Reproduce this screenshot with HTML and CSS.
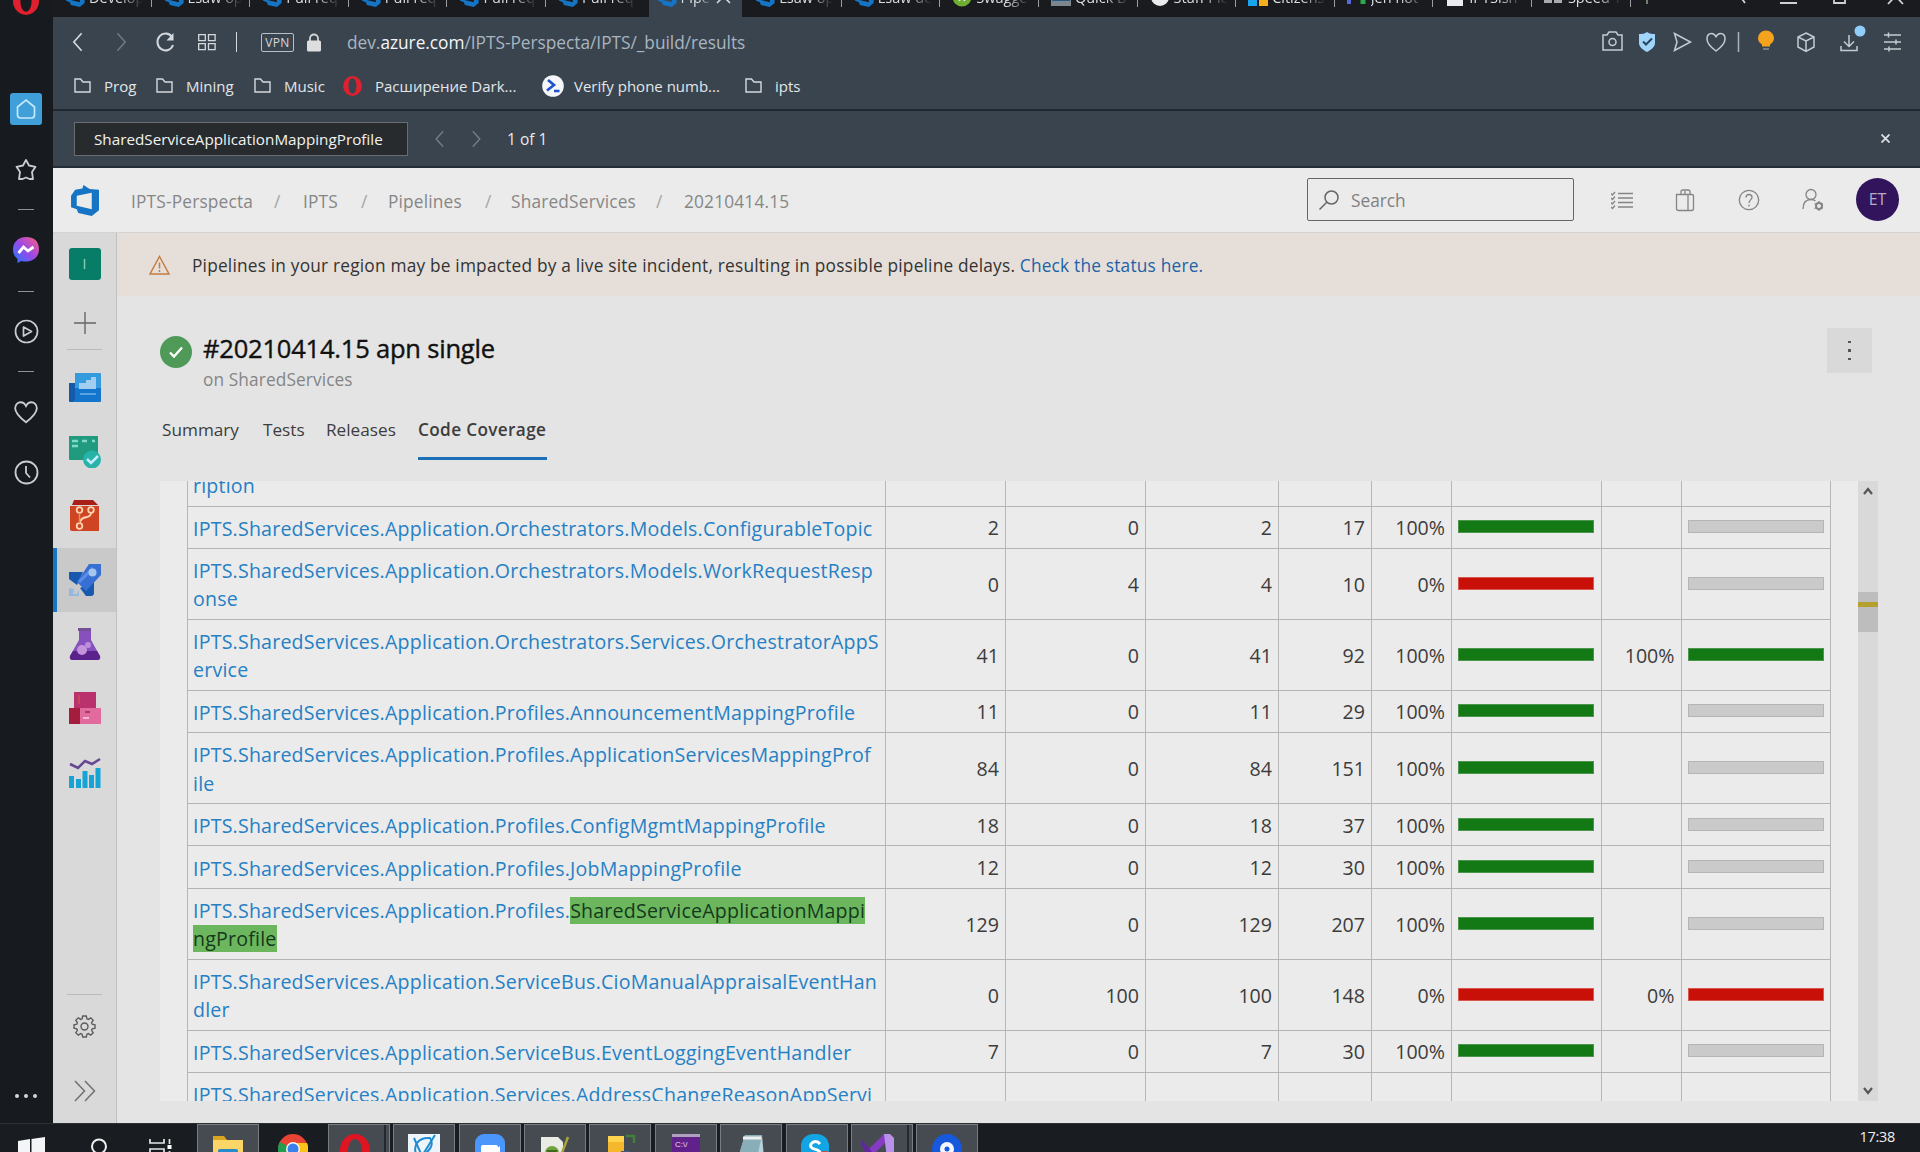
FILE: index.html
```
<!DOCTYPE html>
<html lang="en">
<head>
<meta charset="utf-8">
<title>Pipelines - Code Coverage</title>
<link rel="stylesheet" href="styles.css">
</head>
<body>
<svg class="defs" width="0" height="0">
  <defs>
    <symbol id="azure" viewBox="0 0 28 32"><path fill="#1674c4" fill-rule="evenodd" d="M1 11l4-6 7-1.500L13 0l6 4 9 1v21l-7 6-13-3-1.500-4L1 23zM6.500 11v10.500L21 25V8z"/></symbol>
    <symbol id="folder" viewBox="0 0 17 15"><path d="M1 1h5.500l2.500 3h7v10H1z" fill="none" stroke="#d5d9de" stroke-width="1.400"/></symbol>
    <symbol id="opera" viewBox="0 0 28 30"><path fill="#e0202e" fill-rule="evenodd" d="M14 0a14 15 0 1 0 0 30a14 15 0 0 0 0-30zM14 3.500c3.500 0 6 5 6 11.500s-2.500 11.500-6 11.500S8 21.500 8 15s2.500-11.500 6-11.500z"/></symbol>
    <symbol id="heart" viewBox="0 0 24 24"><path d="M12 21.500C5 16 2 12.500 2 8.500 2 5 4.500 3 7 3c2.300 0 4 1.500 5 3.500C13 4.500 14.700 3 17 3c2.500 0 5 2 5 5.500 0 4-3 7.500-10 13z" fill="none" stroke="currentColor" stroke-width="1.700"/></symbol>
    <symbol id="left" viewBox="0 0 12 22"><path d="M10.500 1.500 2 11l8.500 9.500" fill="none" stroke="currentColor" stroke-width="1.800"/></symbol>
    <symbol id="right" viewBox="0 0 12 22"><path d="M1.500 1.500 10 11l-8.500 9.500" fill="none" stroke="currentColor" stroke-width="1.800"/></symbol>
  </defs>
</svg>
<div class="screen">
  <aside class="rail">
    <svg class="rail-logo" width="26" height="30"><use href="#opera"/></svg>
    <div class="rail-home"><svg width="22" height="22" viewBox="0 0 22 22"><path d="M2.500 9 11 2l8.500 7v8q0 3-3 3h-11q-3 0-3-3z" fill="none" stroke="#c8e8fb" stroke-width="1.700"/></svg></div>
    <svg class="rail-star" width="24" height="24" viewBox="0 0 24 24"><path d="m12 2 3 5.500 6.500 1.300L18 14l1 7h-3.500L12 19.500 8.500 21H5l1-7L2.500 8.800 9 7.500z" fill="none" stroke="#c9cdd1" stroke-width="1.800" stroke-linejoin="round"/></svg>
    <i class="dash"></i>
    <svg class="rail-icon" width="26" height="27" viewBox="0 0 26 27"><defs><linearGradient id="mg" x1="0" y1="1" x2="1" y2="0"><stop offset="0" stop-color="#1e7cff"/><stop offset=".5" stop-color="#9a48e8"/><stop offset="1" stop-color="#ff5f7c"/></linearGradient></defs><path fill="url(#mg)" d="M13 0C5 0 0 5.500 0 12.500c0 4 1.500 7 4.500 9.500v4l4-2c9 2.500 17.500-3 17.500-11.500S21 0 13 0z"/><path d="m5.500 16 5-6 4.500 4 5.500-4" fill="none" stroke="#fff" stroke-width="2.800"/></svg>
    <i class="dash"></i>
    <svg class="rail-icon" width="25" height="25" viewBox="0 0 25 25" fill="none" stroke="#c9cdd1" stroke-width="1.700"><circle cx="12.500" cy="12.500" r="11"/><path d="m9.500 8 8 4.500-8 4.500z" stroke-linejoin="round"/></svg>
    <i class="dash"></i>
    <svg class="rail-icon" width="28" height="26"><use href="#heart"/></svg>
    <svg class="rail-clock" width="25" height="25" viewBox="0 0 25 25" fill="none" stroke="#c9cdd1" stroke-width="1.800"><circle cx="12.500" cy="12.500" r="11"/><path d="M12 6v7l4 4.500"/></svg>
    <div class="rail-dots"><b></b><b></b><b></b></div>
  </aside>

  <div class="window">
    <div class="tabs">
      <div class="tab"><svg width="20" height="22"><use href="#azure"/></svg><span>Develop</span></div>
      <div class="tab"><svg width="20" height="22"><use href="#azure"/></svg><span>Lsaw op</span></div>
      <div class="tab"><svg width="20" height="22"><use href="#azure"/></svg><span>Pull req</span></div>
      <div class="tab"><svg width="20" height="22"><use href="#azure"/></svg><span>Pull req</span></div>
      <div class="tab"><svg width="20" height="22"><use href="#azure"/></svg><span>Pull req</span></div>
      <div class="tab no-line"><svg width="20" height="22"><use href="#azure"/></svg><span>Pull req</span></div>
      <div class="tab active"><svg width="20" height="22"><use href="#azure"/></svg><span>Pipe</span><svg class="tab-x" width="15" height="15" viewBox="0 0 15 15"><path d="m1 1 13 13M14 1 1 14" stroke="#d5d9de" stroke-width="1.600"/></svg></div>
      <div class="tab"><svg width="20" height="22"><use href="#azure"/></svg><span>Lsaw op</span></div>
      <div class="tab"><svg width="20" height="22"><use href="#azure"/></svg><span>Lsaw de</span></div>
      <div class="tab"><svg width="20" height="22" viewBox="0 0 20 22"><circle cx="10" cy="12" r="9.500" fill="#6fae35"/><path d="M6 10v3l2 3M14 10v3l-2 3" stroke="#e5efda" fill="none" stroke-width="1.500"/></svg><span>Swagge</span></div>
      <div class="tab"><svg width="20" height="22" viewBox="0 0 20 22"><path d="M0 2h20v19H0z" fill="#7d868d"/><path d="M1 3h18v13H1z" fill="#245b85"/></svg><span>Quick B</span></div>
      <div class="tab"><svg width="20" height="22" viewBox="0 0 20 22"><circle cx="10" cy="12" r="9" fill="#e9ebec"/></svg><span>Staff Ple</span></div>
      <div class="tab"><svg width="20" height="22" viewBox="0 0 20 22"><path d="M0 11h9v10H0z" fill="#18a5ee"/><path d="M11 11h9v10h-9z" fill="#f6b01d"/></svg><span>Citizens</span></div>
      <div class="tab"><svg width="20" height="22" viewBox="0 0 20 22"><path d="M2 8v11" stroke="#5868d8" stroke-width="4"/><path d="M16 8v11" stroke="#2eaa4c" stroke-width="5"/></svg><span>Jen not</span></div>
      <div class="tab"><svg width="20" height="22" viewBox="0 0 20 22"><path d="M2 6h16v15H2z" fill="#e9ebec"/></svg><span>IPTSish</span></div>
      <div class="tab"><svg width="20" height="22" viewBox="0 0 20 22"><path d="M0 14h8v4H0zM10 14h8v4h-8z" fill="#a6abb0"/></svg><span>Speed T</span></div>
      <svg class="newtab" width="16" height="16" viewBox="0 0 16 16"><path d="M8 0v16M0 7h16" stroke="#8ea48c" stroke-width="1.500"/></svg>
      <svg class="winctl" width="176" height="17" viewBox="0 0 176 17" fill="none" stroke="#cfd2d5" stroke-width="1.800"><path d="m3-4 5 7M43 3h17M97-6v9h11v-9M151 4l15-16m-15 0 15 16"/></svg>
    </div>

    <div class="toolbar">
      <svg class="t-back" width="11" height="22"><use href="#left"/></svg>
      <svg class="t-fwd" width="11" height="22"><use href="#right"/></svg>
      <svg class="t-reload" width="20" height="21" viewBox="0 0 20 21"><path d="M17 5A8 8.500 0 1 0 18 13" fill="none" stroke="#d5d9de" stroke-width="2"/><path d="M18.500 1v7.500h-7z" fill="#d5d9de"/></svg>
      <svg class="t-grid" width="18" height="17" viewBox="0 0 18 17" fill="none" stroke="#d5d9de" stroke-width="1.300"><path d="M.7.7h6.600v6H.7zM10.500.7h6.600v6h-6.600zM.7 9.700h6.600v6H.7zM10.500 9.700h6.600v6h-6.600z"/></svg>
      <i class="t-sep"></i>
      <span class="vpn">VPN</span>
      <svg class="t-lock" width="14" height="19" viewBox="0 0 14 19"><path d="M3 9V5.500a4 4 0 0 1 8 0V9" fill="none" stroke="#d5d5d5" stroke-width="1.800"/><rect y="7.500" width="14" height="11" rx="1.500" fill="#dedede"/></svg>
      <span class="url">dev.<b>azure.com</b>/IPTS-Perspecta/IPTS/_build/results</span>
      <svg class="t-actions" width="310" height="36" viewBox="0 0 310 36" fill="none" stroke="#c4cbd2" stroke-width="1.500">
        <path d="M3 11h4l2-3h7l2 3h4v15H3z"/><circle cx="12.500" cy="18" r="3.500"/>
        <path d="M47 8c3 2 5 2 8 2v9c0 4-4 7-8 9-4-2-8-5-8-9v-9c3 0 5 0 8-2z" fill="#a0d4fb" stroke="none"/><path d="m43 17.500 3 3 6-6" stroke="#26455f" stroke-width="2"/>
        <path d="m74.500 9.500 16 8.500-16 8.500 2.500-8.500z"/>
        <path d="M116 27c-7-5-9-8.500-9-12 0-3.500 2-5.500 4.500-5.500 2 0 3.500 1.300 4.500 3.200 1-1.900 2.500-3.200 4.500-3.200 2.500 0 4.500 2 4.500 5.500 0 3.500-2 7-9 12z"/>
        <path d="M138.500 8v20" stroke="#aab4bd"/>
        <path d="M162 20.500c-3-2-4-4-4-6.500a8 7.500 0 0 1 16 0c0 2.500-1 4.500-4 6.500v2h-8z" fill="#f5a21d" stroke="none"/><path d="M163 24h6v2h-6z" fill="#777d80" stroke="none"/>
        <path d="m206 9 8 4v10l-8 4.500-8-4.500V13zm-8 4 8 4 8-4m-8 4v10"/>
        <path d="M249 11v11m-5-4.500 5 5 5-5M241 22v4.500h16V22"/><circle cx="260" cy="7" r="5.500" fill="#91cdf9" stroke="none"/>
        <path d="M284 11h17M284 18h17M284 25h17M288.500 8.500v5M296 15.500v5M289 22.500v5"/>
      </svg>
    </div>

    <div class="bookmarks">
      <span><svg width="17" height="15"><use href="#folder"/></svg>Prog</span>
      <span><svg width="17" height="15"><use href="#folder"/></svg>Mining</span>
      <span><svg width="17" height="15"><use href="#folder"/></svg>Music</span>
      <span><svg width="19" height="20"><use href="#opera"/></svg>Расширение Dark...</span>
      <span><svg width="22" height="22" viewBox="0 0 22 22"><circle cx="11" cy="11" r="10.800" fill="#f4f6f8"/><path d="m6 5 6 5-7 5.500M12 16h5.500" fill="none" stroke="#1e50cc" stroke-width="2.600"/></svg>Verify phone numb...</span>
      <span><svg width="17" height="15"><use href="#folder"/></svg>ipts</span>
    </div>

    <div class="find">
      <div class="find-input">SharedServiceApplicationMappingProfile</div>
      <svg class="find-prev" width="11" height="18"><use href="#left"/></svg>
      <svg class="find-next" width="11" height="18"><use href="#right"/></svg>
      <span class="find-count">1 of 1</span>
      <svg class="find-close" width="9" height="9" viewBox="0 0 9 9"><path d="m.5.5 8 8m0-8-8 8" stroke="#dce0e4" stroke-width="1.800"/></svg>
    </div>

    <header class="ado-head">
      <svg class="ado-logo" width="29" height="31" viewBox="0 0 28 32" preserveAspectRatio="none"><use href="#azure"/></svg>
      <nav class="crumbs">
        <span>IPTS-Perspecta</span><i>/</i><span>IPTS</span><i>/</i><span>Pipelines</span><i>/</i><span>SharedServices</span><i>/</i><span>20210414.15</span>
      </nav>
      <div class="search"><svg width="20" height="20" viewBox="0 0 20 20" fill="none" stroke="#666" stroke-width="1.500"><circle cx="12.500" cy="7.500" r="6.500"/><path d="m8 12-7.500 7.500"/></svg><span>Search</span></div>
      <svg class="head-icons" width="212" height="30" viewBox="0 0 212 30" fill="none" stroke="#858585" stroke-width="1.300">
        <path d="M7 8.500h15M7 13h15M7 17.500h15M7 22h15M0 8.500l1.500 1.500L4 7M0 13l1.500 1.500L4 11.500M0 17.500 1.500 19 4 16M0 22l1.500 1.500L4 20.500"/>
        <path d="M65.500 9.500H81q1.500 0 1.500 1.500v12.500q0 2-2 2H67.500q-2 0-2-2zM77 9.500v16M70 9.500V7q0-2 2-2h5q2 0 2 2v2M74 9.500V6"/>
        <circle cx="138" cy="15" r="9.700"/><path d="M135 12.500c0-4 6-4 6 0 0 2-3 2.500-3 5.500M138 19.500v2"/>
        <circle cx="200" cy="9.500" r="5"/><path d="M192 24c0-6 3-9.500 8-9.500 2 0 3.500.5 4.500 1.500"/><circle cx="208" cy="21" r="3" stroke-width="2"/><path d="M208 16v2M208 24v2M203.500 18.500l2 1M211 22.500l2 1M203.500 23.500l2-1M211 19.500l1.500-1"/>
      </svg>
      <div class="avatar">ET</div>
    </header>

    <div class="ado-body">
      <nav class="side">
        <div class="tile">I</div>
        <svg class="side-plus" width="22" height="22" viewBox="0 0 22 22"><path d="M11 0v22M0 11h22" stroke="#666" stroke-width="1.400"/></svg>
        <i class="line"></i>
        <div class="side-item"><svg width="32" height="32" viewBox="0 0 32 32"><path d="M0 11h8v19H1q-1 0-1-1z" fill="#155aa8"/><path d="M6 1h25q1 0 1 1v22H6z" fill="#359ade"/><path d="M6 16h26v13q0 1-1 1H3q3-1 3-4z" fill="#1574cc"/><path d="M10 11h7V8h5V5h5v12H10z" fill="#a3cdf0"/><path d="M11 22h16" stroke="#71b3ea" stroke-width="1.500"/></svg></div>
        <div class="side-item"><svg width="32" height="32" viewBox="0 0 32 32"><path d="M0 0h29v24H1q-1 0-1-1z" fill="#219b80"/><path d="M3 5h6m4 0h5m5 0h3M3 10h6" stroke="#7fdbc6" stroke-width="2.500"/><circle cx="23" cy="23.500" r="9" fill="#28b3a8"/><path d="m18 23 4 4 7-7" fill="none" stroke="#c7ecff" stroke-width="2.500"/></svg></div>
        <div class="side-item"><svg width="32" height="32" viewBox="0 0 32 32"><path d="M5 0h19l5 5H3z" fill="#a81f15"/><path d="M1 6h29v25H3q-2 0-2-2z" fill="#cf4523"/><g fill="none" stroke="#ffd5b0" stroke-width="1.800"><circle cx="10.500" cy="10" r="2.800"/><circle cx="22" cy="10" r="2.800"/><circle cx="10.500" cy="26" r="2.800"/><path d="M22 13q0 3-4 4-7 1-7 6"/></g><path d="M10.500 13v10" stroke="#e98a60" stroke-width="1.500"/></svg></div>
        <div class="side-item selected"><svg width="32" height="32" viewBox="0 0 32 32"><path d="M0 8h14L8 21 0 15zM11 24l14-6v11q0 3-3 3h-5z" fill="#1759af"/><path d="M20 0h12v11L17 27l-9-9z" fill="#386fd3"/><path d="m10 18 14-14" stroke="#5d8ceb" stroke-width="3"/><circle cx="23.500" cy="8.500" r="4" fill="#a5c6ed"/><path d="m0 24 5 1-1 5h4l2-4v5l-1 1H0z" fill="#94b9df"/></svg></div>
        <div class="side-item"><svg width="32" height="32" viewBox="0 0 32 32"><path d="M10 2h12v10l9 16q1 4-3 4H4q-4 0-3-4l9-16z" fill="#8651bd"/><path d="M4 23h24l3 5q1 4-3 4H4q-4 0-3-4z" fill="#5b228d"/><path d="M9 0h13v3H9z" fill="#765097"/><circle cx="13" cy="22" r="5" fill="#c493dc"/><circle cx="19" cy="17" r="3" fill="#bd8edc"/></svg></div>
        <div class="side-item"><svg width="32" height="32" viewBox="0 0 32 32"><path d="M5 0h22v16H5z" fill="#ba326d"/><path d="M0 16h12v16H0z" fill="#a51d3c"/><path d="M11 16h21v16H11z" fill="#e16b9c"/><path d="M16 20h5" stroke="#ad3567" stroke-width="2"/><path d="M14 26h6" stroke="#f6b6d0" stroke-width="2"/><path d="M10 3v9" stroke="#d35a4d"/></svg></div>
        <div class="side-item"><svg width="32" height="32" viewBox="0 0 32 32"><path d="M0 20h5v12H0zM7 23h5v9H7zM13.500 15h5v17h-5zM20 19h5v13h-5zM26.500 12h5v20h-5z" fill="#16a3d5"/><path d="m1 8 8 4 7-7 7 3 8-5" fill="none" stroke="#684792" stroke-width="2.600"/></svg></div>
        <i class="line low"></i>
        <svg class="side-gear" width="23" height="23" viewBox="0 0 23 23" fill="none" stroke="#5d5d5d" stroke-width="1.400"><path d="M9.700 1h3.600l.6 2.800 1.400.6 2.500-1.600 2.400 2.500-1.600 2.400.6 1.500 2.800.6v3.500l-2.800.6-.6 1.400 1.600 2.500-2.500 2.400-2.400-1.600-1.400.6-.6 2.800H9.700l-.6-2.800-1.400-.6-2.500 1.600-2.400-2.500 1.600-2.400-.6-1.400L1 13.300V9.800l2.800-.6.6-1.500-1.600-2.400 2.500-2.500 2.400 1.600 1.400-.6z"/><circle cx="11.500" cy="11.500" r="3.500"/></svg>
        <svg class="side-more" width="22" height="22" viewBox="0 0 22 22" fill="none" stroke="#707070" stroke-width="1.500"><path d="m1 1 9.500 10L1 21M11 1l9.500 10L11 21"/></svg>
      </nav>

      <main class="main">
        <div class="banner">
          <svg width="21" height="20" viewBox="0 0 21 20" fill="none" stroke="#c47d43" stroke-width="1.500"><path d="M10.500 1.500 20 19H1z"/><path d="M10.500 7.500v6M10.500 15v2"/></svg>
          <p>Pipelines in your region may be impacted by a live site incident, resulting in possible pipeline delays. <a>Check the status here.</a></p>
        </div>
        <div class="run">
          <svg class="ok" width="32" height="32" viewBox="0 0 32 32"><circle cx="16" cy="16" r="16" fill="#4f9a58"/><path d="m10 16.500 4 4 8-9" fill="none" stroke="#fff" stroke-width="2.400"/></svg>
          <div class="run-text"><h1>#20210414.15 apn single</h1><p>on SharedServices</p></div>
          <div class="kebab"><b></b><b></b><b></b></div>
        </div>
        <div class="run-tabs"><span>Summary</span><span>Tests</span><span>Releases</span><span class="on">Code Coverage</span></div>

        <div class="frame">
          <div class="table">
            <div class="row first"><div><a>ription</a></div><div></div><div></div><div></div><div></div><div></div><div></div><div></div><div></div></div>
            <div class="row"><div><a>IPTS.SharedServices.Application.Orchestrators.Models.ConfigurableTopic</a></div><div>2</div><div>0</div><div>2</div><div>17</div><div>100%</div><div><i class="bar green"></i></div><div></div><div><i class="bar"></i></div></div>
            <div class="row two"><div><a>IPTS.SharedServices.Application.Orchestrators.Models.WorkRequestResp<br>onse</a></div><div>0</div><div>4</div><div>4</div><div>10</div><div>0%</div><div><i class="bar red"></i></div><div></div><div><i class="bar"></i></div></div>
            <div class="row two"><div><a>IPTS.SharedServices.Application.Orchestrators.Services.OrchestratorAppS<br>ervice</a></div><div>41</div><div>0</div><div>41</div><div>92</div><div>100%</div><div><i class="bar green"></i></div><div>100%</div><div><i class="bar green"></i></div></div>
            <div class="row"><div><a>IPTS.SharedServices.Application.Profiles.AnnouncementMappingProfile</a></div><div>11</div><div>0</div><div>11</div><div>29</div><div>100%</div><div><i class="bar green"></i></div><div></div><div><i class="bar"></i></div></div>
            <div class="row two"><div><a>IPTS.SharedServices.Application.Profiles.ApplicationServicesMappingProf<br>ile</a></div><div>84</div><div>0</div><div>84</div><div>151</div><div>100%</div><div><i class="bar green"></i></div><div></div><div><i class="bar"></i></div></div>
            <div class="row"><div><a>IPTS.SharedServices.Application.Profiles.ConfigMgmtMappingProfile</a></div><div>18</div><div>0</div><div>18</div><div>37</div><div>100%</div><div><i class="bar green"></i></div><div></div><div><i class="bar"></i></div></div>
            <div class="row"><div><a>IPTS.SharedServices.Application.Profiles.JobMappingProfile</a></div><div>12</div><div>0</div><div>12</div><div>30</div><div>100%</div><div><i class="bar green"></i></div><div></div><div><i class="bar"></i></div></div>
            <div class="row two"><div><a>IPTS.SharedServices.Application.Profiles.<mark>SharedServiceApplicationMappi<br>ngProfile</mark></a></div><div>129</div><div>0</div><div>129</div><div>207</div><div>100%</div><div><i class="bar green"></i></div><div></div><div><i class="bar"></i></div></div>
            <div class="row two"><div><a>IPTS.SharedServices.Application.ServiceBus.CioManualAppraisalEventHan<br>dler</a></div><div>0</div><div>100</div><div>100</div><div>148</div><div>0%</div><div><i class="bar red"></i></div><div>0%</div><div><i class="bar red"></i></div></div>
            <div class="row"><div><a>IPTS.SharedServices.Application.ServiceBus.EventLoggingEventHandler</a></div><div>7</div><div>0</div><div>7</div><div>30</div><div>100%</div><div><i class="bar green"></i></div><div></div><div><i class="bar"></i></div></div>
            <div class="row last"><div><a>IPTS.SharedServices.Application.Services.AddressChangeReasonAppServi</a></div><div></div><div></div><div></div><div></div><div></div><div></div><div></div><div></div></div>
          </div>
          <div class="scroll">
            <svg width="10" height="10" viewBox="0 0 10 10"><path d="m1 8 4-5 4 5" fill="none" stroke="#555" stroke-width="2.200"/></svg>
            <div class="thumb"><i></i></div>
            <svg class="down" width="10" height="10" viewBox="0 0 10 10"><path d="m1 2 4 5 4-5" fill="none" stroke="#555" stroke-width="2.200"/></svg>
          </div>
        </div>
      </main>
    </div>
  </div>

  <footer class="taskbar">
    <svg class="start" width="27" height="20" viewBox="0 0 27 20"><path d="M0 5 12 3v13H0zM13.500 3 27 1v15H13.500zM0 17.500h12V20H0zM13.500 17.500H27V20H13.500z" fill="#f3f5f6"/></svg>
    <svg class="tsearch" width="18" height="20" viewBox="0 0 18 20" fill="none" stroke="#f0f0f0" stroke-width="2"><circle cx="9" cy="9.500" r="7"/><path d="m6 16-3 5"/></svg>
    <svg class="tview" width="24" height="18" viewBox="0 0 24 18" fill="none" stroke="#e5e5e5" stroke-width="1.700"><path d="M1 0v4h14V0M1 18v-8h14v8M20.500 0v5M20.500 12v6"/><path d="M18.500 6h4v4h-4z" fill="#fff" stroke="none"/></svg>
    <div class="apps">
      <div class="app"><svg width="32" height="22" viewBox="0 0 32 22"><path d="M1 2h11l3 4h16v16H1z" fill="#d9a521"/><path d="M1 6h30v16H1z" fill="#fbd566"/><path d="M6 17q0-2 2-2h16q2 0 2 2v5H6z" fill="#288ac9"/></svg></div>
      <div class="app bare"><svg width="30" height="25" viewBox="0 0 30 25"><circle cx="15" cy="15" r="15" fill="#e84334"/><path d="M15 15 2 8a15 15 0 0 0 3 19z" fill="#229c4e"/><path d="M15 15V9h14a15 15 0 0 1-6 19z" fill="#fbc318"/><circle cx="15" cy="15" r="7" fill="#f4f4f4"/><circle cx="15" cy="15" r="5.500" fill="#3a80ea"/></svg></div>
      <div class="app stack"><svg width="30" height="26" viewBox="0 0 30 26"><path d="M15 0a15 16 0 1 0 0 32a15 16 0 0 0 0-32z" fill="#e11522"/><ellipse cx="15" cy="16" rx="7" ry="11" fill="#454b50"/></svg></div>
      <div class="app"><svg width="32" height="26" viewBox="0 0 32 26"><path d="M0 0h32v26H0z" fill="#edf5fb"/><path d="m6 4 8 18L27 1" fill="none" stroke="#218bd1" stroke-width="2"/><path d="M9 22C4 12 10 3 22 4c4 6 1 12-8 18" fill="none" stroke="#218bd1" stroke-width="2"/></svg></div>
      <div class="app"><svg width="30" height="25" viewBox="0 0 30 25"><rect width="30" height="34" rx="9" fill="#4a96fa"/><rect x="6" y="11" width="17" height="16" rx="2" fill="#fff"/><path d="m21 15 4-3v13h-4z" fill="#fff"/></svg></div>
      <div class="app"><svg width="32" height="24" viewBox="0 0 32 24"><path d="M2 3h17l5 5v16H2z" fill="#e9ece5"/><circle cx="13" cy="19" r="7" fill="#71a13c"/><path d="M21 24 29 3" stroke="#a9a53b" stroke-width="2.500"/><path d="M8 17h10" stroke="#3d6921" stroke-width="2"/></svg></div>
      <div class="app"><svg width="32" height="25" viewBox="0 0 32 25"><path d="M4 2h16v23H4z" fill="#f5b72b"/><path d="M4 2h16v6H4z" fill="#ffd34d"/><path d="M22 2h8v7" fill="none" stroke="#40813b" stroke-width="2.500"/><path d="M17 17h9v8h-9z" fill="#345e8e"/></svg></div>
      <div class="app"><svg width="28" height="21" viewBox="0 0 28 21"><path d="M0 0h28v21H0z" fill="#60218a"/><path d="M0 0h28v3H0z" fill="#afa0bd"/><text x="3" y="13" fill="#e8ddee" font-size="8" font-family="Liberation Sans">C:\/</text></svg></div>
      <div class="app"><svg width="30" height="24" viewBox="0 0 30 24"><path d="M9 1h17l2 23H2z" fill="#b7d2da"/><path d="M9 1h17l-5 23H2z" fill="#88aeba"/><path d="M7 4h18" stroke="#eee" stroke-width="3"/></svg></div>
      <div class="app"><svg width="32" height="25" viewBox="0 0 32 25"><rect width="28" height="34" rx="12" fill="#12a5e4"/><path d="M19 10c-4-5-11-1-9 3 2 3 9 2 9 6 0 3-5 4-10 2" fill="none" stroke="#fff" stroke-width="3"/><circle cx="24" cy="26" r="9" fill="#e34130"/></svg></div>
      <div class="app stack"><svg width="32" height="25" viewBox="0 0 32 25"><path d="m22 0 10 4v21h-7V7L10 22H0z" fill="#853bc4"/><path d="M22 0h6l4 4v21h-7z" fill="#b991e8"/><path d="m0 6 16 19H7L0 12z" fill="#6325a0"/></svg></div>
      <div class="app"><svg width="30" height="24" viewBox="0 0 30 24"><circle cx="15" cy="15" r="15" fill="#1759dd"/><circle cx="15" cy="15" r="7" fill="#f4f7ff"/><circle cx="15" cy="15" r="2.500" fill="#1759dd"/></svg></div>
    </div>
    <span class="clock">17:38</span>
  </footer>
</div>
</body>
</html>
```
FILE: styles.css
```
* { box-sizing: border-box; }
body { margin: 0; font-family: "Open Sans", "Noto Sans", sans-serif; overflow: hidden; }
.defs { display: block; position: absolute; }
svg { flex: none; display: block; }
.screen { width: 1920px; height: 1152px; overflow: hidden; display: grid; grid-template: 1123px 29px / 53px 1867px; background: #181b20; }

/* browser side rail */
.rail { background: #171a1f; color: #c9cdd1; display: flex; flex-direction: column; align-items: center; overflow: hidden; padding-right: 1px; }
.rail-logo { margin-top: -14px; }
.rail-home { margin-top: 77px; width: 32px; height: 32px; border-radius: 3px; background: #3f9fd9; display: grid; place-items: center; }
.rail-star { margin-top: 33px; }
.dash { width: 16px; height: 1px; background: #8d9297; margin-top: 27px; flex: none; }
.rail-icon { margin-top: 27px; }
.rail-icon + .dash { margin-top: 27px; }
.rail-clock { margin-top: 35px; }
.rail-dots { margin-top: auto; margin-bottom: 25px; display: flex; gap: 5px; }
.rail-dots b { width: 4px; height: 4px; border-radius: 50%; background: #d5d5d5; }

.window { display: grid; grid-template-rows: 17px 50px 44px 57px 65px 890px; min-width: 0; background: #e4e4e4; }

/* tabs */
.tabs { background: #191b1e; display: flex; height: 17px; overflow: hidden; }
.tab { width: 98.600px; flex: none; height: 17px; padding-left: 12px; display: flex; position: relative; }
.tab::after { content: ""; position: absolute; right: 0; top: 0; width: 1px; height: 7px; background: #9a9ea2; }
.tab.no-line::after, .tab.active::after { display: none; }
.tab > svg { margin-top: -15px; width: 20px; }
.tab span { margin: -12px 0 0 4px; font-size: 14.500px; line-height: 20px; height: 27px; width: 54px; overflow: hidden; white-space: nowrap; color: #dcdfe1; -webkit-mask-image: linear-gradient(90deg, #000 55%, transparent); mask-image: linear-gradient(90deg, #000 55%, transparent); }
.tab.active { background: linear-gradient(#3a444f, #3a444f) 4px 0 / 93px 17px no-repeat; }
.tab.active span { width: 31px; }
.tab .tab-x { width: 15px; margin: -11px 0 0 4px; }
.newtab { margin: -12px 0 0 8px; }
.winctl { margin-left: 82px; }

/* address bar */
.toolbar { background: #3a444f; display: flex; align-items: center; color: #d5d9de; padding-left: 19px; }
.t-fwd { margin-left: 33px; color: #6d7781; }
.t-reload { margin-left: 28px; }
.t-grid { margin-left: 23px; }
.t-sep { width: 1px; height: 20px; background: #d5d9de; margin-left: 20px; }
.vpn { margin-left: 24px; width: 33px; height: 19px; border: 1.500px solid #b9c1c8; border-radius: 2px; font-size: 12px; line-height: 17px; text-align: center; letter-spacing: .3px; }
.t-lock { margin-left: 13px; }
.url { margin-left: 26px; width: 419px; margin-top: 1px; font-size: 17.300px; letter-spacing: -.02px; white-space: nowrap; color: #a9b5c0; }
.url b { font-weight: 400; color: #f4f6f8; }
.t-actions { margin-left: 834px; }

.bookmarks { background: #3a444f; border-bottom: 2px solid #202931; display: grid; grid-template-columns: 82px 98px 89px 199px 203px 80px; padding-left: 21px; padding-bottom: 5px; font-size: 15px; color: #e2e6e9; }
.bookmarks span { display: flex; align-items: center; gap: 13px; white-space: nowrap; }
.bookmarks span:nth-child(5) { gap: 10px; }

/* find in page */
.find { background: #3a444f; border-bottom: 2px solid #242d36; display: flex; align-items: center; color: #737c85; padding-left: 21px; }
.find-input { width: 334px; height: 34px; border: 1.500px solid #696d70; background: #282b2d; color: #f1f2f2; font-size: 15.250px; line-height: 32px; padding-left: 19px; white-space: nowrap; }
.find-prev { margin-left: 26px; }
.find-next { margin-left: 26px; }
.find-count { margin-left: 25px; color: #e8eaec; font-size: 15.500px; }
.find-close { margin-left: auto; margin-right: 30px; }

/* site header */
.ado-head { background: #ebebeb; border-bottom: 1px solid #d5d3d1; display: flex; align-items: center; padding-left: 17px; }
.crumbs { margin: 2px 0 0 32px; width: 1176px; display: grid; grid-template-columns: 143px 29px 58px 27px 97px 26px 145px 28px auto; font-size: 17.300px; letter-spacing: .18px; color: #868686; white-space: nowrap; }
.crumbs i { font-style: normal; color: #a5a5a5; }
.search { width: 267px; height: 43px; margin-top: -1px; border: 1.500px solid #666; border-radius: 2px; display: flex; align-items: center; gap: 12px; padding-left: 11px; color: #808080; font-size: 17.300px; }
.search span { padding-top: 2px; }
.head-icons { margin-left: 37px; }
.avatar { margin-left: 33px; margin-top: -1px; width: 43px; height: 43px; border-radius: 50%; background: #31145c; color: #b6abca; font-size: 16px; line-height: 43px; text-align: center; }

.ado-body { display: grid; grid-template-columns: 64px 1803px; height: 890px; }
.side { background: #d9d9d9; border-right: 1px solid #c0c0c0; display: flex; flex-direction: column; align-items: center; }
.tile { width: 32px; height: 32px; margin-top: 15px; border-radius: 3px; background: #077d68; color: #a0d2c7; font-size: 14px; line-height: 32px; text-align: center; flex: none; }
.side-plus { margin-top: 32px; }
.line { width: 35px; height: 1px; background: #bababa; margin: 15px 0 6px; flex: none; }
.side-item { width: 63px; height: 64px; display: grid; place-items: center; flex: none; }
.side-item.selected { background: #c9c9c9; border-left: 4px solid #1476c4; padding-right: 4px; }
.line.low { margin: 190px 0 0; }
.side-gear { margin-top: 20px; }
.side-more { margin-top: 42px; }

.main { display: flex; flex-direction: column; min-width: 0; }
.banner { height: 63px; flex: none; background: #e6dfd9; display: flex; align-items: center; padding-left: 32px; gap: 22px; }
.banner p { margin: 2px 0 0; font-size: 17.300px; letter-spacing: .2px; color: #333; white-space: nowrap; }
.banner a { color: #1b62a8; }
.run { height: 107px; flex: none; display: flex; padding: 32px 0 0 43px; }
.ok { margin-top: 8px; }
.run-text { margin: -1px 0 0 11px; flex: 1; }
h1 { margin: 0; font-size: 25.500px; font-weight: 500; line-height: 42px; letter-spacing: -.2px; color: #111; white-space: nowrap; -webkit-text-stroke: .4px #111; }
.run-text p { margin: 0; font-size: 17.300px; letter-spacing: .1px; line-height: 22px; color: #858585; }
.kebab { width: 45px; height: 45px; margin-right: 48px; background: #d9d9d9; display: flex; flex-direction: column; align-items: center; justify-content: center; gap: 6px; }
.kebab b { width: 2.500px; height: 2.500px; background: #555; }
.run-tabs { height: 57px; flex: none; display: grid; grid-template-columns: 101px 63px 92px 129px; padding-left: 45px; font-size: 17.200px; line-height: 54px; color: #3d3d3d; white-space: nowrap; }
.run-tabs .on { font-weight: 600; border-bottom: 3px solid #1c70b8; letter-spacing: .35px; }

/* coverage report */
.frame { margin: 21px 0 0 43px; width: 1718px; height: 620px; overflow: hidden; background: #ebebeb; display: flex; justify-content: space-between; }
.table { margin-left: 27px; width: 1644px; border-left: 1px solid #b7b7b7; }
.row { height: 42.530px; display: grid; grid-template-rows: 100%; grid-template-columns: 698px 120px 140px 133px 93px 80px 149.500px 80px 149.500px; border-bottom: 1px solid #b3b3b3; font-size: 19.600px; line-height: 28.300px; color: #3c3c3c; }
.row.two { height: 70.800px; }
.row.first { height: 25.500px; }
.row > div { border-right: 1px solid #b7b7b7; padding: 2px 6px 0 0; display: flex; align-items: center; justify-content: flex-end; white-space: nowrap; min-width: 0; }
.row > div:first-child { justify-content: flex-start; padding: 3px 0 0 5px; }
.row > div:nth-child(7), .row > div:nth-child(9) { justify-content: flex-start; padding: 0 0 1px 6px; }
.row.first > div:first-child { align-items: flex-end; padding: 0 0 5px 5px; }
.row a { color: #2680c4; letter-spacing: .2px; }
mark { background: #6cb75e; color: #14391c; }
.bar { display: block; width: 136px; height: 13px; background: #cacaca; border: 1px solid #b5b5b5; }
.bar.green { background: #137915; border-color: #4b954c; }
.bar.red { background: #c91008; border-color: #d6584f; }
.scroll { width: 20px; background: #d9d9d9; display: flex; flex-direction: column; align-items: center; padding: 5px 0; }
.thumb { width: 20px; height: 40px; margin-top: 96px; background: #bdbdbd; padding-top: 10px; }
.thumb i { display: block; height: 5px; background: #b5a02d; }
.down { margin-top: auto; }

/* taskbar */
.taskbar { grid-column: 1 / 3; background: #191c20; border-top: 1px solid #2b3033; display: flex; overflow: hidden; height: 29px; }
.start { margin: 12px 0 0 18px; }
.tsearch { margin: 13px 0 0 45px; }
.tview { margin: 15px 0 0 41px; }
.apps { display: flex; gap: 3.400px; margin-left: 24px; }
.app { width: 62px; height: 29px; background: #454b50; border: 1px solid #777d81; display: flex; justify-content: center; padding-top: 9px; flex: none; overflow: hidden; }
.app.bare { background: none; border-color: transparent; }
.app.stack { background: linear-gradient(90deg, #454b50 55px, #24292d 55px, #24292d 57px, #454b50 57px); padding-right: 7px; }
.clock { margin: 5px 25px 0 auto; font-size: 14.500px; line-height: 16px; color: #eef0f0; letter-spacing: -.3px; }
```
